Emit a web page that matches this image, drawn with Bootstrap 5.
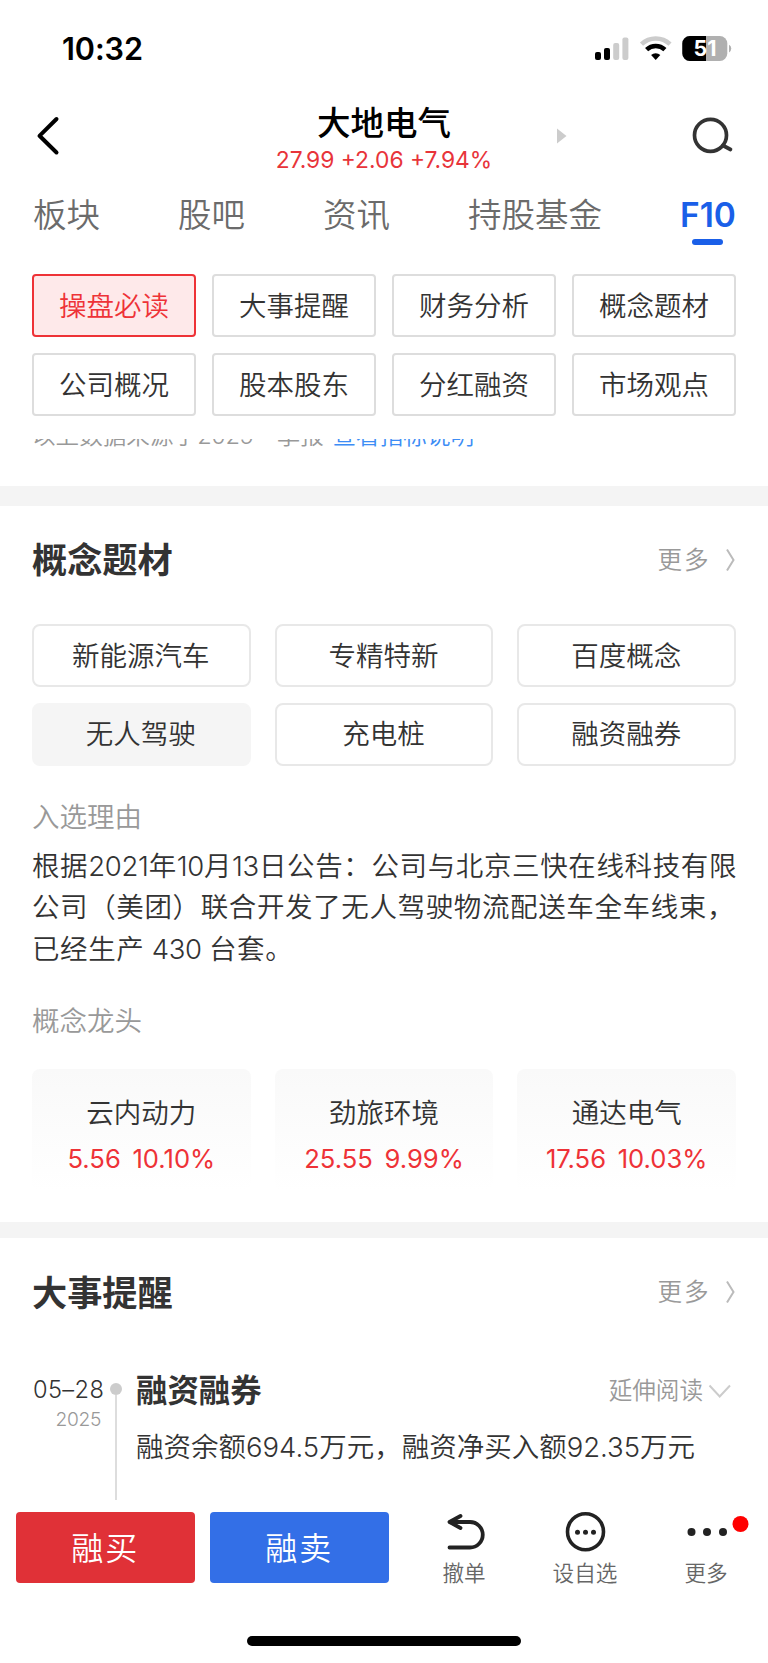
<!DOCTYPE html>
<html lang="zh-CN">
<head>
<meta charset="utf-8">
<meta name="viewport" content="width=device-width, initial-scale=1">
<title>大地电气 F10</title>
<link href="https://cdn.jsdelivr.net/npm/bootstrap@5.3.0/dist/css/bootstrap.min.css" rel="stylesheet">
<style>
  body{font-family:Inter,"Noto Sans CJK SC",sans-serif;font-weight:350;color:#333;background:#fff;font-size:27.5px;line-height:40px;width:768px;white-space:nowrap;overflow-x:hidden}
  svg{display:block;flex:none}
  .gutter{padding-left:32px;padding-right:32px}
  .status{height:96px;padding:2px 35px 0 62px;color:#000}
  .clock{font-size:30.6px;font-weight:600;letter-spacing:-.1px}
  .topbar{height:84px;padding:0 34px 0 36px}
  .stock-name{font-size:33.5px;font-weight:500;color:#000;line-height:38px;margin-top:8px}
  .quote{font-size:22.8px;font-weight:400;line-height:36px;color:#e8343a}
  .tabs{height:94px;padding-top:13px;padding-left:33px;font-size:33.5px;line-height:44px;color:#6b6b6b}
  .tab-on{color:#1a5fe8;font-weight:600}
  .tab-on::after{content:"";display:block;width:31px;height:6px;border-radius:3px;background:#1a5fe8;margin:1.5px auto 0}
  .tiles{display:grid;grid-template-columns:repeat(4,1fr);gap:16px}
  .tile{height:63px;border:2px solid #ddd;border-radius:4px}
  .tile-on{border-color:#ee3237;background:#fee9ea;color:#ee3237}
  .source{height:47px;margin-top:23px;font-size:23.6px;color:#999;overflow:hidden}
  .source div{line-height:32px;margin-top:-19px}
  .source a{color:#3d8df5;text-decoration:none}
  .band{background:#f4f4f4}
  .sec-title{font-size:35.2px;font-weight:600;margin:0;padding-top:1px;line-height:44px}
  .more{font-size:24.6px;letter-spacing:1.9px;color:#999}
  .chips{display:grid;grid-template-columns:repeat(3,1fr);gap:15.5px 24px}
  .chip{height:63px;border:2px solid #e8e8e8;border-radius:8px;padding-right:1px}
  .chip-on{background:#f5f5f5;border-color:#f5f5f5}
  .label-grey{color:#999}
  .reason{line-height:41.4px;margin:9px 0 31px;letter-spacing:.62px}
  .leader{height:122.5px;padding-top:24px;border-radius:8px;background:linear-gradient(#f9f9f9,#fff)}
  .leader-num{font-size:25.6px;font-weight:400;color:#ee3237;line-height:36px;margin-top:8px;word-spacing:4.5px}
  .events{height:154px;overflow:hidden}
  .date{width:83px;padding:26px 0 0 1px;font-size:23.6px;letter-spacing:.4px;line-height:36px}
  .year{font-size:19.2px;line-height:22px;color:#999;letter-spacing:-.3px;padding-right:14px}
  .dotline{width:13px;margin-right:14px;padding-top:37px}
  .dot{width:12px;height:12px;border-radius:50%;background:#ccc}
  .vline{width:2px;height:105px;background:#ddd}
  .ev-title{font-size:31.4px;font-weight:600}
  .ev-more{font-size:23.6px;color:#999}
  .trade{width:178.5px;height:71px;padding-top:3px;border-radius:4px;color:#fff;font-size:32px;letter-spacing:2px}
  .act{width:121px;font-size:21.6px;color:#666;line-height:30px}
  .homebar{width:274px;height:10px;border-radius:5px;background:#000}
</style>
</head>
<body>
<header>
  <div class="status d-flex align-items-center justify-content-between">
    <div class="clock">10:32</div>
    <div class="d-flex align-items-center">
      <svg width="138" height="28" viewBox="0 0 138 28">
        <rect x="0" y="17" width="6" height="8" rx="2"/><rect x="9" y="13" width="6" height="12" rx="2"/>
        <rect x="18.2" y="8" width="6" height="17" rx="2" fill="#ccc"/><rect x="27.4" y="2.500" width="6" height="22.500" rx="2" fill="#ccc"/>
        <g fill="none"><path d="M46.500 9.200a20.500 20.500 0 0 1 28.500 0" stroke="#ccc" stroke-width="4.500"/><path d="M51.600 14.700a13.300 13.300 0 0 1 18.300 0" stroke="#000" stroke-width="4.500"/></g>
        <path d="M60.700 25l-4.600-4.900a6.800 6.800 0 0 1 9.200 0z"/>
        <rect x="87.300" y="1" width="45" height="25" rx="7.500" fill="#b0b0b0"/><path d="M94.800 1H111v25H94.800a7.500 7.500 0 0 1-7.500-7.500v-10A7.500 7.500 0 0 1 94.800 1z"/>
        <path d="M134 9.800a4.300 4.300 0 0 1 0 7.600z" fill="#b0b0b0"/>
        <text x="110" y="21" text-anchor="middle" font-family="Inter" font-weight="700" font-size="21.500" fill="#fff">51</text>
      </svg>
    </div>
  </div>
  <div class="topbar d-flex justify-content-between position-relative">
    <svg width="26" height="80" viewBox="0 0 26 80" fill="none" stroke="#000" stroke-width="4" stroke-linecap="round" stroke-linejoin="round"><path d="M20.500 23L3.500 39.800 20.500 56.500"/></svg>
    <div class="text-center position-absolute start-0 end-0"><div class="stock-name">大地电气</div><div class="quote">27.99 +2.06 +7.94%</div></div>
    <svg width="177" height="80" viewBox="0 0 177 80"><path d="M0 32.500L9.500 40 0 47.500z" fill="#ccc"/><g fill="none" stroke="#333" stroke-width="3.700" stroke-linecap="round"><circle cx="153.500" cy="39.300" r="16"/><path d="M166 49.500l7.500 4"/></g></svg>
  </div>
  <nav class="tabs gutter d-flex justify-content-between">
    <span>板块</span><span>股吧</span><span>资讯</span><span>持股基金</span><span class="tab-on">F10</span>
  </nav>
  <div class="tiles gutter">
    <div class="tile tile-on d-flex align-items-center justify-content-center">操盘必读</div>
    <div class="tile d-flex align-items-center justify-content-center">大事提醒</div>
    <div class="tile d-flex align-items-center justify-content-center">财务分析</div>
    <div class="tile d-flex align-items-center justify-content-center">概念题材</div>
    <div class="tile d-flex align-items-center justify-content-center">公司概况</div>
    <div class="tile d-flex align-items-center justify-content-center">股本股东</div>
    <div class="tile d-flex align-items-center justify-content-center">分红融资</div>
    <div class="tile d-flex align-items-center justify-content-center">市场观点</div>
  </div>
</header>
<main>
  <div class="source gutter"><div>以上数据来源于<span style="letter-spacing:-.4px">2025</span>一季报 <a href="#" style="margin-left:2px">查看指标说明</a></div></div>
  <div class="band" style="height:20px"></div>
  <section class="gutter" style="padding-bottom:31px">
    <div class="d-flex align-items-center justify-content-between" style="height:118px;padding-bottom:11px">
      <h2 class="sec-title">概念题材</h2>
      <div class="more d-flex align-items-center">更多<svg width="12" height="26" viewBox="0 0 12 26" fill="none" stroke="#bbb" stroke-width="2" style="margin-left:13.500px"><path d="M3 2.500L9.500 13 3 23.500"/></svg></div>
    </div>
    <div class="chips">
      <div class="chip d-flex align-items-center justify-content-center">新能源汽车</div>
      <div class="chip d-flex align-items-center justify-content-center">专精特新</div>
      <div class="chip d-flex align-items-center justify-content-center">百度概念</div>
      <div class="chip chip-on d-flex align-items-center justify-content-center">无人驾驶</div>
      <div class="chip d-flex align-items-center justify-content-center">充电桩</div>
      <div class="chip d-flex align-items-center justify-content-center">融资融券</div>
    </div>
    <div class="label-grey" style="margin-top:31.5px">入选理由</div>
    <p class="reason">根据<span style="letter-spacing:-.3px">2021</span>年<span style="letter-spacing:-.3px">10</span>月<span style="letter-spacing:-.3px">13</span>日公告：公司与北京三快在线科技有限<br>公司（美团）联合开发了无人驾驶物流配送车全车线束，<br>已经生产<span style="letter-spacing:-.4px"> 430 </span>台套。</p>
    <div class="label-grey">概念龙头</div>
    <div class="chips text-center" style="margin-top:27.5px">
      <div class="leader"><div>云内动力</div><div class="leader-num">5.56 10.10%</div></div>
      <div class="leader"><div>劲旅环境</div><div class="leader-num">25.55 9.99%</div></div>
      <div class="leader"><div>通达电气</div><div class="leader-num">17.56 10.03%</div></div>
    </div>
  </section>
  <div class="band" style="height:16px"></div>
  <section class="gutter">
    <div class="d-flex align-items-center justify-content-between" style="height:108px">
      <h2 class="sec-title">大事提醒</h2>
      <div class="more d-flex align-items-center">更多<svg width="12" height="26" viewBox="0 0 12 26" fill="none" stroke="#bbb" stroke-width="2" style="margin-left:13.500px"><path d="M3 2.500L9.500 13 3 23.500"/></svg></div>
    </div>
    <div class="events d-flex">
      <div class="date"><div>05–28</div><div class="year text-end">2025</div></div>
      <div class="dotline d-flex flex-column align-items-center" style="margin-left:-6px"><div class="dot flex-shrink-0"></div><div class="vline flex-shrink-0"></div></div>
      <div class="flex-fill" style="padding-top:25px">
        <div class="d-flex align-items-center justify-content-between"><div class="ev-title">融资融券</div>
          <div class="ev-more d-flex align-items-center">延伸阅读<svg width="33" height="20" viewBox="0 0 33 20" fill="none" stroke="#ccc" stroke-width="2"><path d="M6.500 4.500L16.700 15.500 27 4.500"/></svg></div></div>
        <div style="margin-top:16px">融资余额<span>694.5</span>万元，融资净买入额<span>92.35</span>万元</div>
      </div>
    </div>
  </section>
</main>
<footer>
  <div class="d-flex" style="height:136px;padding:12px 0 0 16px">
    <div class="trade d-flex align-items-center justify-content-center" style="background:#e03137">融买</div>
    <div class="trade d-flex align-items-center justify-content-center" style="background:#336fe7;margin:0 15px 0 15.500px">融卖</div>
    <div class="act d-flex flex-column align-items-center">
      <svg width="44" height="46" viewBox="0 0 44 46" fill="none" stroke="#222" stroke-width="3.800" stroke-linecap="round" stroke-linejoin="round" style="margin-left:5px"><path d="M15.500 4L4.500 10l11 6M4.500 10H25a12.750 12.750 0 0 1 0 25.500H4.500"/></svg>撤单</div>
    <div class="act d-flex flex-column align-items-center">
      <svg width="44" height="46" viewBox="0 0 44 46" fill="#222"><circle cx="22.500" cy="19.800" r="18" fill="none" stroke="#222" stroke-width="3.600"/><circle cx="14.500" cy="20.200" r="2.500"/><circle cx="22.500" cy="20.200" r="2.500"/><circle cx="30.500" cy="20.200" r="2.500"/></svg>设自选</div>
    <div class="act d-flex flex-column align-items-center">
      <svg width="90" height="46" viewBox="0 0 90 46" fill="#222"><circle cx="30.500" cy="20" r="4"/><circle cx="46" cy="20" r="4"/><circle cx="62" cy="20" r="4"/><circle cx="79.500" cy="12" r="8" fill="#f00"/></svg>更多</div>
  </div>
  <div class="homebar mx-auto"></div>
</footer>
<script src="https://cdn.jsdelivr.net/npm/bootstrap@5.3.0/dist/js/bootstrap.bundle.min.js"></script>
</body>
</html>
